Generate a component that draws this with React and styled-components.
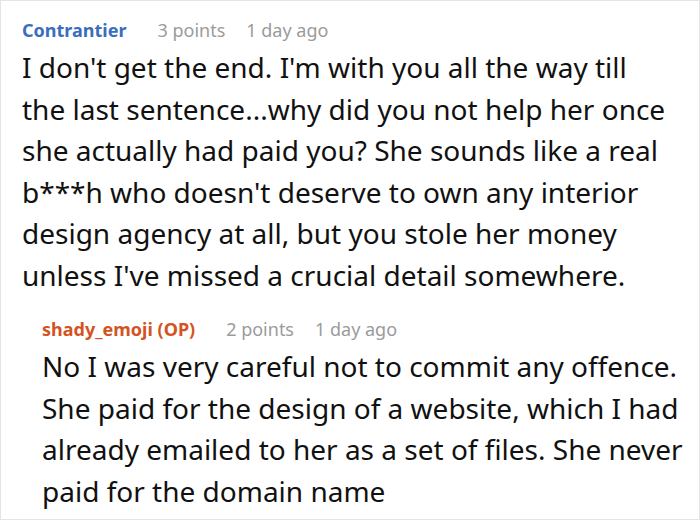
import React from "react";
import styled, { createGlobalStyle } from "styled-components";

const Global = createGlobalStyle`
  html, body { margin: 0; padding: 0; background: #fff; }
  body { font-family: "Noto Sans", "Open Sans", sans-serif; }
`;

const Frame = styled.div`
  box-sizing: border-box;
  width: 700px;
  height: 520px;
  border: 1px solid #e4e4e4;
  background: #fff;
  padding: 14px 20px 0 21px;
  overflow: hidden;
`;

const Comment = styled.div`
  display: flex;
  flex-direction: column;
`;

const Header = styled.div`
  display: flex;
  align-items: baseline;
  font-size: 18px;
  line-height: 30px;
  white-space: nowrap;
`;

const Author = styled.span`
  font-weight: 700;
  color: ${(p) => p.$color};
  margin-right: 31px;
`;

const Meta = styled.span`
  color: #9b9b9b;
  margin-right: 21px;
`;

const Body = styled.div`
  margin-top: 2px;
  font-size: 28px;
  line-height: 41.5px;
  color: #111;
`;

const Line = styled.div`
  white-space: nowrap;
`;

const Reply = styled.div`
  display: flex;
  margin-top: 18px;
`;

const Bar = styled.div`
  width: 2px;
  background: #e3e3e3;
  margin: 14px 20px 5px 0;
  align-self: stretch;
`;

const first = [
  "I don't get the end. I'm with you all the way till",
  "the last sentence...why did you not help her once",
  "she actually had paid you? She sounds like a real",
  "b***h who doesn't deserve to own any interior",
  "design agency at all, but you stole her money",
  "unless I've missed a crucial detail somewhere.",
];

const second = [
  "No I was very careful not to commit any offence.",
  "She paid for the design of a website, which I had",
  "already emailed to her as a set of files. She never",
  "paid for the domain name",
];

export default function App() {
  return (
    <>
      <Global />
      <Frame>
        <Comment>
          <Header>
            <Author $color="#3b6dbf">Contrantier</Author>
            <Meta>3 points</Meta>
            <Meta>1 day ago</Meta>
          </Header>
          <Body>
            {first.map((l) => (
              <Line key={l}>{l}</Line>
            ))}
          </Body>
        </Comment>
        <Reply>
          <Bar />
          <Comment>
            <Header>
              <Author $color="#d4531f">shady_emoji (OP)</Author>
              <Meta>2 points</Meta>
              <Meta>1 day ago</Meta>
            </Header>
            <Body>
              {second.map((l) => (
                <Line key={l}>{l}</Line>
              ))}
            </Body>
          </Comment>
        </Reply>
      </Frame>
    </>
  );
}
